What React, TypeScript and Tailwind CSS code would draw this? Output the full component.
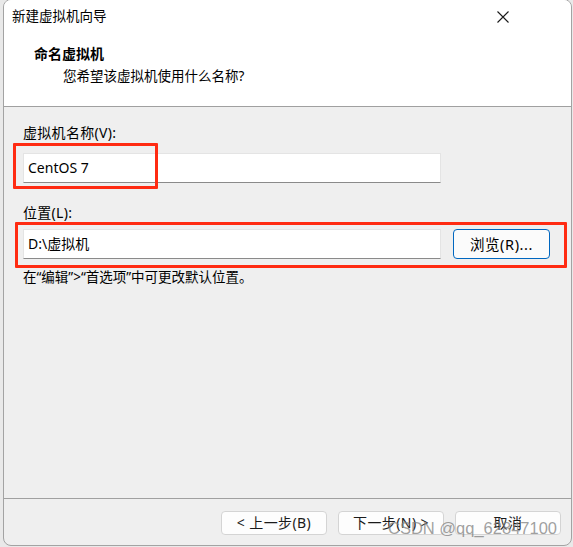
import React from "react";

const font = { fontFamily: '"Noto Sans", "Noto Sans CJK SC", sans-serif' };

function CloseIcon() {
  return (
    <svg width="12" height="12" viewBox="0 0 12 12" className="block">
      <path d="M0.5 0.5 L11.5 11.5 M11.5 0.5 L0.5 11.5" stroke="#1a1a1a" strokeWidth="1.1" fill="none" />
    </svg>
  );
}

function DialogButton({ children }: { children: React.ReactNode }) {
  return (
    <button className="w-[106px] h-[24px] rounded-[4px] border border-[#d4d4d4] bg-[#fdfdfd] text-[14px] tracking-[0.4px] leading-none text-[#1b1b1b] flex items-center justify-center">
      {children}
    </button>
  );
}

export default function App() {
  return (
    <main className="relative w-[573px] h-[547px] bg-[#e9e9e9] overflow-hidden" style={font}>
      {/* ===== window ===== */}
      <div className="absolute left-[3px] top-[-1px] w-[569px] h-[547px] rounded-lg border border-[#a3a3a3] bg-[#efefef] overflow-hidden flex flex-col text-black">
        {/* title + header */}
        <div className="h-[107px] bg-white border-b border-[#a0a0a0] flex flex-col">
          <div className="h-[33px] flex items-center justify-between pl-[8px] pr-[62px]">
            <span className="text-[13.5px] leading-none pt-[1px]">新建虚拟机向导</span>
            <CloseIcon />
          </div>
          <div className="pl-[30px] pt-[12px] text-[14px] font-bold leading-[18px]">命名虚拟机</div>
          <div className="pl-[59px] pt-[4px] text-[13.5px] leading-[18px]">您希望该虚拟机使用什么名称?</div>
        </div>

        {/* body */}
        <div className="flex-1 px-[19px] pt-[17px] text-[14px]">
          <div className="leading-[18px] tracking-[0.3px]">虚拟机名称(V):</div>
          <div className="mt-[11px] w-[418px] h-[30px] bg-white border border-[#e4e4e4] border-b-[#8a8a8a] flex items-center pl-[4px] leading-none">
            CentOS 7
          </div>

          <div className="mt-[21px] leading-[18px] tracking-[0.3px]">位置(L):</div>
          <div className="mt-[7px] flex items-center gap-[12px]">
            <div className="w-[418px] h-[30px] bg-white border border-[#e4e4e4] border-b-[#8a8a8a] flex items-center pl-[4px] leading-none">
              D:\虚拟机
            </div>
            <button className="w-[97px] h-[30px] rounded-[4px] border border-[#0067c0] bg-[#fbfbfb] text-[14.5px] tracking-[0.6px] leading-none flex items-center justify-center">
              浏览(R)...
            </button>
          </div>
          <div className="mt-[9px] leading-[18px] text-[13.5px]">在“编辑”&gt;“首选项”中可更改默认位置。</div>
        </div>

        {/* footer */}
        <div className="h-[47px] border-t border-[#a0a0a0] flex justify-end items-start gap-[11px] pt-[12px] pr-[10px]">
          <DialogButton>&lt; 上一步(B)</DialogButton>
          <DialogButton>下一步(N) &gt;</DialogButton>
          <DialogButton>取消</DialogButton>
        </div>
      </div>

      {/* ===== annotations ===== */}
      <div className="absolute left-[13px] top-[143px] w-[145px] h-[46px] border-[3px] border-[#ff2b12] rounded-[1px]" />
      <div className="absolute left-[15px] top-[222px] w-[552px] h-[46px] border-[3px] border-[#ff2b12] rounded-[1px]" />
      <div className="absolute left-[388px] top-[518px] text-[16.5px] leading-[20px] text-[#808080]/75 whitespace-nowrap" style={{ fontFamily: '"Liberation Sans", Arial, sans-serif' }}>
        CSDN @qq_62847100
      </div>
    </main>
  );
}
